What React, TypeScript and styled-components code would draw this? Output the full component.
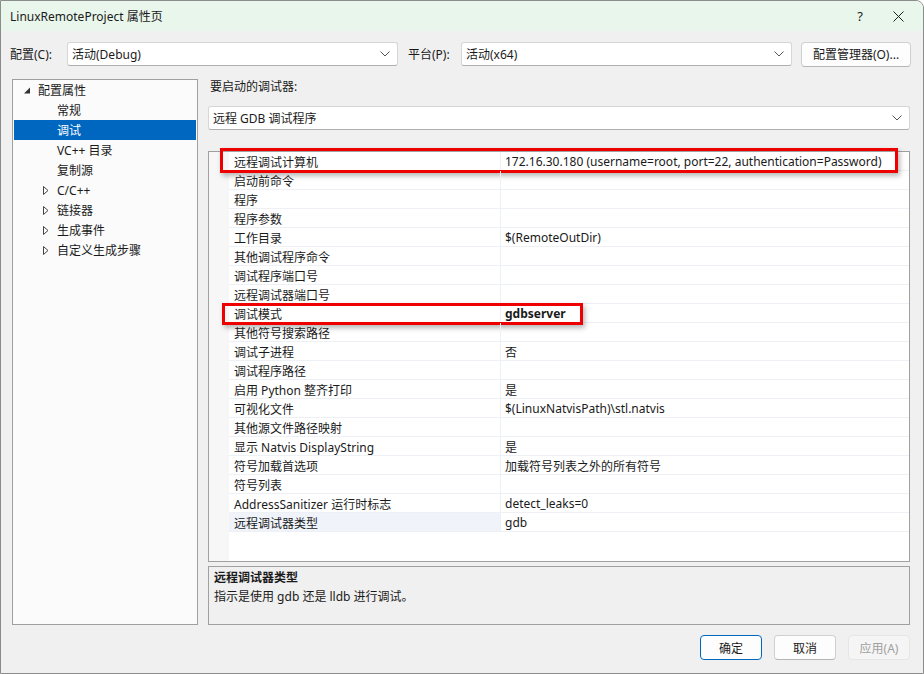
import React from "react";
import styled, { createGlobalStyle } from "styled-components";

const Global = createGlobalStyle`
  html, body { margin: 0; padding: 0; background: #ffffff; }
  body { font-family: "Segoe UI", "Noto Sans", "Noto Sans CJK SC", sans-serif; font-size: 12px; color: #1a1a1a; }
  * { box-sizing: border-box; }
`;

const FONT = `"Segoe UI", "Noto Sans", "Noto Sans CJK SC", sans-serif`;

const Window = styled.div`
  width: 924px;
  height: 674px;
  border: 1px solid #8c8c8c;
  border-radius: 0 8px 0 0;
  background: #f0f0f0;
  display: flex;
  flex-direction: column;
  overflow: hidden;
  font-family: ${FONT};
  font-size: 12px;
`;

const TitleBar = styled.div`
  height: 30px;
  background: #e9f6eb;
  display: flex;
  align-items: center;
  padding-left: 9px;
  flex: none;
`;

const Title = styled.div`
  flex: 1;
  color: #1a1a1a;
`;

const TitleButton = styled.div`
  width: 38px;
  height: 30px;
  display: flex;
  align-items: center;
  justify-content: center;
  color: #222;
  font-size: 13px;
`;

const ConfigBar = styled.div`
  display: flex;
  align-items: center;
  margin-top: 11px;
  padding: 0 13px 0 9px;
  height: 24px;
  flex: none;
`;

const Label = styled.div<{ $w?: number; $pl?: number }>`
  width: ${(p) => p.$w ?? 57}px;
  padding-left: ${(p) => p.$pl ?? 0}px;
  flex: none;
  white-space: nowrap;
`;

const Combo = styled.div<{ $w?: number }>`
  ${(p) => (p.$w ? `width: ${p.$w}px; flex: none;` : "flex: none;")}
  height: 24px;
  background: #ffffff;
  border: 1px solid #d6d6d6;
  border-bottom-color: #b0b0b0;
  border-radius: 3px;
  display: flex;
  align-items: center;
  padding-left: 4px;
`;

const ComboText = styled.div`
  flex: 1;
`;

const Chevron = styled.svg`
  width: 10px;
  height: 6px;
  margin-right: 7px;
  flex: none;
`;

const Spacer = styled.div<{ $w?: number; $h?: number }>`
  flex: none;
  width: ${(p) => p.$w ?? 0}px;
  height: ${(p) => p.$h ?? 0}px;
`;

const Button = styled.div<{ $primary?: boolean; $disabled?: boolean; $w?: number }>`
  width: ${(p) => p.$w ?? 62}px;
  height: 25px;
  flex: none;
  display: flex;
  align-items: center;
  justify-content: center;
  border-radius: 4px;
  background: ${(p) => (p.$disabled ? "#f5f5f5" : "#fdfdfd")};
  color: ${(p) => (p.$disabled ? "#a0a0a0" : "#1a1a1a")};
  border: 1px solid ${(p) => (p.$primary ? "#0067c0" : p.$disabled ? "#e6e6e6" : "#d0d0d0")};
  border-bottom-color: ${(p) => (p.$primary ? "#0067c0" : p.$disabled ? "#e6e6e6" : "#b5b5b5")};
`;

const Main = styled.div`
  display: flex;
  gap: 10px;
  margin-top: 13px;
  padding: 0 13px 0 11px;
  height: 546px;
  flex: none;
`;

const Tree = styled.div`
  width: 186px;
  flex: none;
  background: #fbfbfb;
  border: 1px solid #a0a0a0;
  padding: 0 1px;
`;

const TreeRow = styled.div<{ $selected?: boolean; $indent: number }>`
  height: 20px;
  display: flex;
  align-items: center;
  padding-left: ${(p) => p.$indent}px;
  background: ${(p) => (p.$selected ? "#0067c0" : "transparent")};
  color: ${(p) => (p.$selected ? "#ffffff" : "#1a1a1a")};
`;

const Expander = styled.svg`
  width: 8px;
  height: 9px;
  flex: none;
  margin-right: 7px;
`;

const RightPane = styled.div`
  flex: 1;
  display: flex;
  flex-direction: column;
`;

const SectionLabel = styled.div`
  height: 16px;
  line-height: 16px;
  padding-left: 2px;
`;

const Grid = styled.div`
  margin-top: 21px;
  height: 411px;
  background: #ffffff;
  border: 1px solid #a0a0a0;
  display: flex;
  flex: none;
`;

const Gutter = styled.div`
  width: 20px;
  flex: none;
  background: #f7f7f7;
`;

const Rows = styled.div`
  flex: 1;
  display: flex;
  flex-direction: column;
`;

const Row = styled.div`
  height: 19px;
  display: flex;
  position: relative;
  border-bottom: 1px solid #edf0f5;
`;

const NameCell = styled.div<{ $selected?: boolean }>`
  width: 272px;
  flex: none;
  padding: 1px 0 0 5px;
  display: flex;
  align-items: center;
  background: ${(p) => (p.$selected ? "#f0f4fa" : "transparent")};
  border-right: 1px solid #edf0f5;
  white-space: nowrap;
`;

const ValueCell = styled.div<{ $bold?: boolean }>`
  flex: 1;
  padding: 1px 0 0 4px;
  display: flex;
  align-items: center;
  font-weight: ${(p) => (p.$bold ? 700 : 400)};
  white-space: nowrap;
`;

const Highlight = styled.div<{ $l: number; $t: number; $w: number; $h: number }>`
  position: absolute;
  left: ${(p) => p.$l}px;
  top: ${(p) => p.$t}px;
  width: ${(p) => p.$w}px;
  height: ${(p) => p.$h}px;
  border: 3px solid #ee0000;
  box-shadow: 2px 3px 5px rgba(0, 0, 0, 0.28);
  pointer-events: none;
`;

const Description = styled.div`
  margin-top: 4px;
  height: 60px;
  border: 1px solid #a0a0a0;
  background: #f0f0f0;
  padding: 2px 5px;
  display: flex;
  flex-direction: column;
  gap: 2px;
`;

const DescTitle = styled.div`
  font-weight: 700;
  line-height: 17px;
`;

const DescText = styled.div`
  line-height: 17px;
`;

const Footer = styled.div`
  display: flex;
  justify-content: flex-end;
  gap: 12px;
  padding: 0 13px 0 0;
  margin-top: 10px;
`;

const ChevronIcon = () => (
  <Chevron viewBox="0 0 10 6">
    <polyline points="0.5,0.5 5,5 9.5,0.5" fill="none" stroke="#555" strokeWidth="1" />
  </Chevron>
);

const treeItems: { text: string; indent: number; kind: "open" | "closed" | "none"; selected?: boolean }[] = [
  { text: "配置属性", indent: 9, kind: "open" },
  { text: "常规", indent: 43, kind: "none" },
  { text: "调试", indent: 43, kind: "none", selected: true },
  { text: "VC++ 目录", indent: 43, kind: "none" },
  { text: "复制源", indent: 43, kind: "none" },
  { text: "C/C++", indent: 28, kind: "closed" },
  { text: "链接器", indent: 28, kind: "closed" },
  { text: "生成事件", indent: 28, kind: "closed" },
  { text: "自定义生成步骤", indent: 28, kind: "closed" },
];

const props: { name: string; value: string; bold?: boolean }[] = [
  { name: "远程调试计算机", value: "172.16.30.180 (username=root, port=22, authentication=Password)" },
  { name: "启动前命令", value: "" },
  { name: "程序", value: "" },
  { name: "程序参数", value: "" },
  { name: "工作目录", value: "$(RemoteOutDir)" },
  { name: "其他调试程序命令", value: "" },
  { name: "调试程序端口号", value: "" },
  { name: "远程调试器端口号", value: "" },
  { name: "调试模式", value: "gdbserver", bold: true },
  { name: "其他符号搜索路径", value: "" },
  { name: "调试子进程", value: "否" },
  { name: "调试程序路径", value: "" },
  { name: "启用 Python 整齐打印", value: "是" },
  { name: "可视化文件", value: "$(LinuxNatvisPath)\\stl.natvis" },
  { name: "其他源文件路径映射", value: "" },
  { name: "显示 Natvis DisplayString", value: "是" },
  { name: "符号加载首选项", value: "加载符号列表之外的所有符号" },
  { name: "符号列表", value: "" },
  { name: "AddressSanitizer 运行时标志", value: "detect_leaks=0" },
  { name: "远程调试器类型", value: "gdb" },
];

export default function App() {
  return (
    <>
      <Global />
      <Window>
        <TitleBar>
          <Title>LinuxRemoteProject 属性页</Title>
          <TitleButton>?</TitleButton>
          <TitleButton>
            <svg width="11" height="11" viewBox="0 0 11 11">
              <path d="M0.5 0.5 L10.5 10.5 M10.5 0.5 L0.5 10.5" stroke="#222" strokeWidth="1" />
            </svg>
          </TitleButton>
          <Spacer $w={6} />
        </TitleBar>

        <ConfigBar>
          <Label $w={57}>配置(C):</Label>
          <Combo $w={331}>
            <ComboText>活动(Debug)</ComboText>
            <ChevronIcon />
          </Combo>
          <Label $w={63} $pl={10}>平台(P):</Label>
          <Combo $w={331}>
            <ComboText>活动(x64)</ComboText>
            <ChevronIcon />
          </Combo>
          <Spacer $w={9} />
          <Button $w={110}>配置管理器(O)...</Button>
        </ConfigBar>

        <Main>
          <Tree>
            {treeItems.map((t) => (
              <TreeRow key={t.text} $indent={t.indent} $selected={t.selected}>
                {t.kind === "open" && (
                  <Expander viewBox="0 0 8 9">
                    <polygon points="7,1.5 7,7.5 1,7.5" fill="#333" />
                  </Expander>
                )}
                {t.kind === "closed" && (
                  <Expander viewBox="0 0 8 9">
                    <polygon points="1.5,0.5 6,4.5 1.5,8.5" fill="none" stroke="#444" strokeWidth="1" />
                  </Expander>
                )}
                <span>{t.text}</span>
              </TreeRow>
            ))}
          </Tree>

          <RightPane>
            <SectionLabel>要启动的调试器:</SectionLabel>
            <Spacer $h={11} />
            <Combo>
              <ComboText>远程 GDB 调试程序</ComboText>
              <ChevronIcon />
            </Combo>
            <Grid>
              <Gutter />
              <Rows>
                {props.map((p, i) => (
                  <Row key={p.name}>
                    <NameCell $selected={i === props.length - 1}>{p.name}</NameCell>
                    <ValueCell $bold={p.bold}>{p.value}</ValueCell>
                    {i === 0 && <Highlight $l={-9} $t={-4} $w={678} $h={25} />}
                    {i === 8 && <Highlight $l={-7} $t={-1} $w={361} $h={22} />}
                  </Row>
                ))}
              </Rows>
            </Grid>
            <Description>
              <DescTitle>远程调试器类型</DescTitle>
              <DescText>指示是使用 gdb 还是 lldb 进行调试。</DescText>
            </Description>
          </RightPane>
        </Main>

        <Footer>
          <Button $primary>确定</Button>
          <Button>取消</Button>
          <Button $disabled>应用(A)</Button>
        </Footer>
      </Window>
    </>
  );
}
